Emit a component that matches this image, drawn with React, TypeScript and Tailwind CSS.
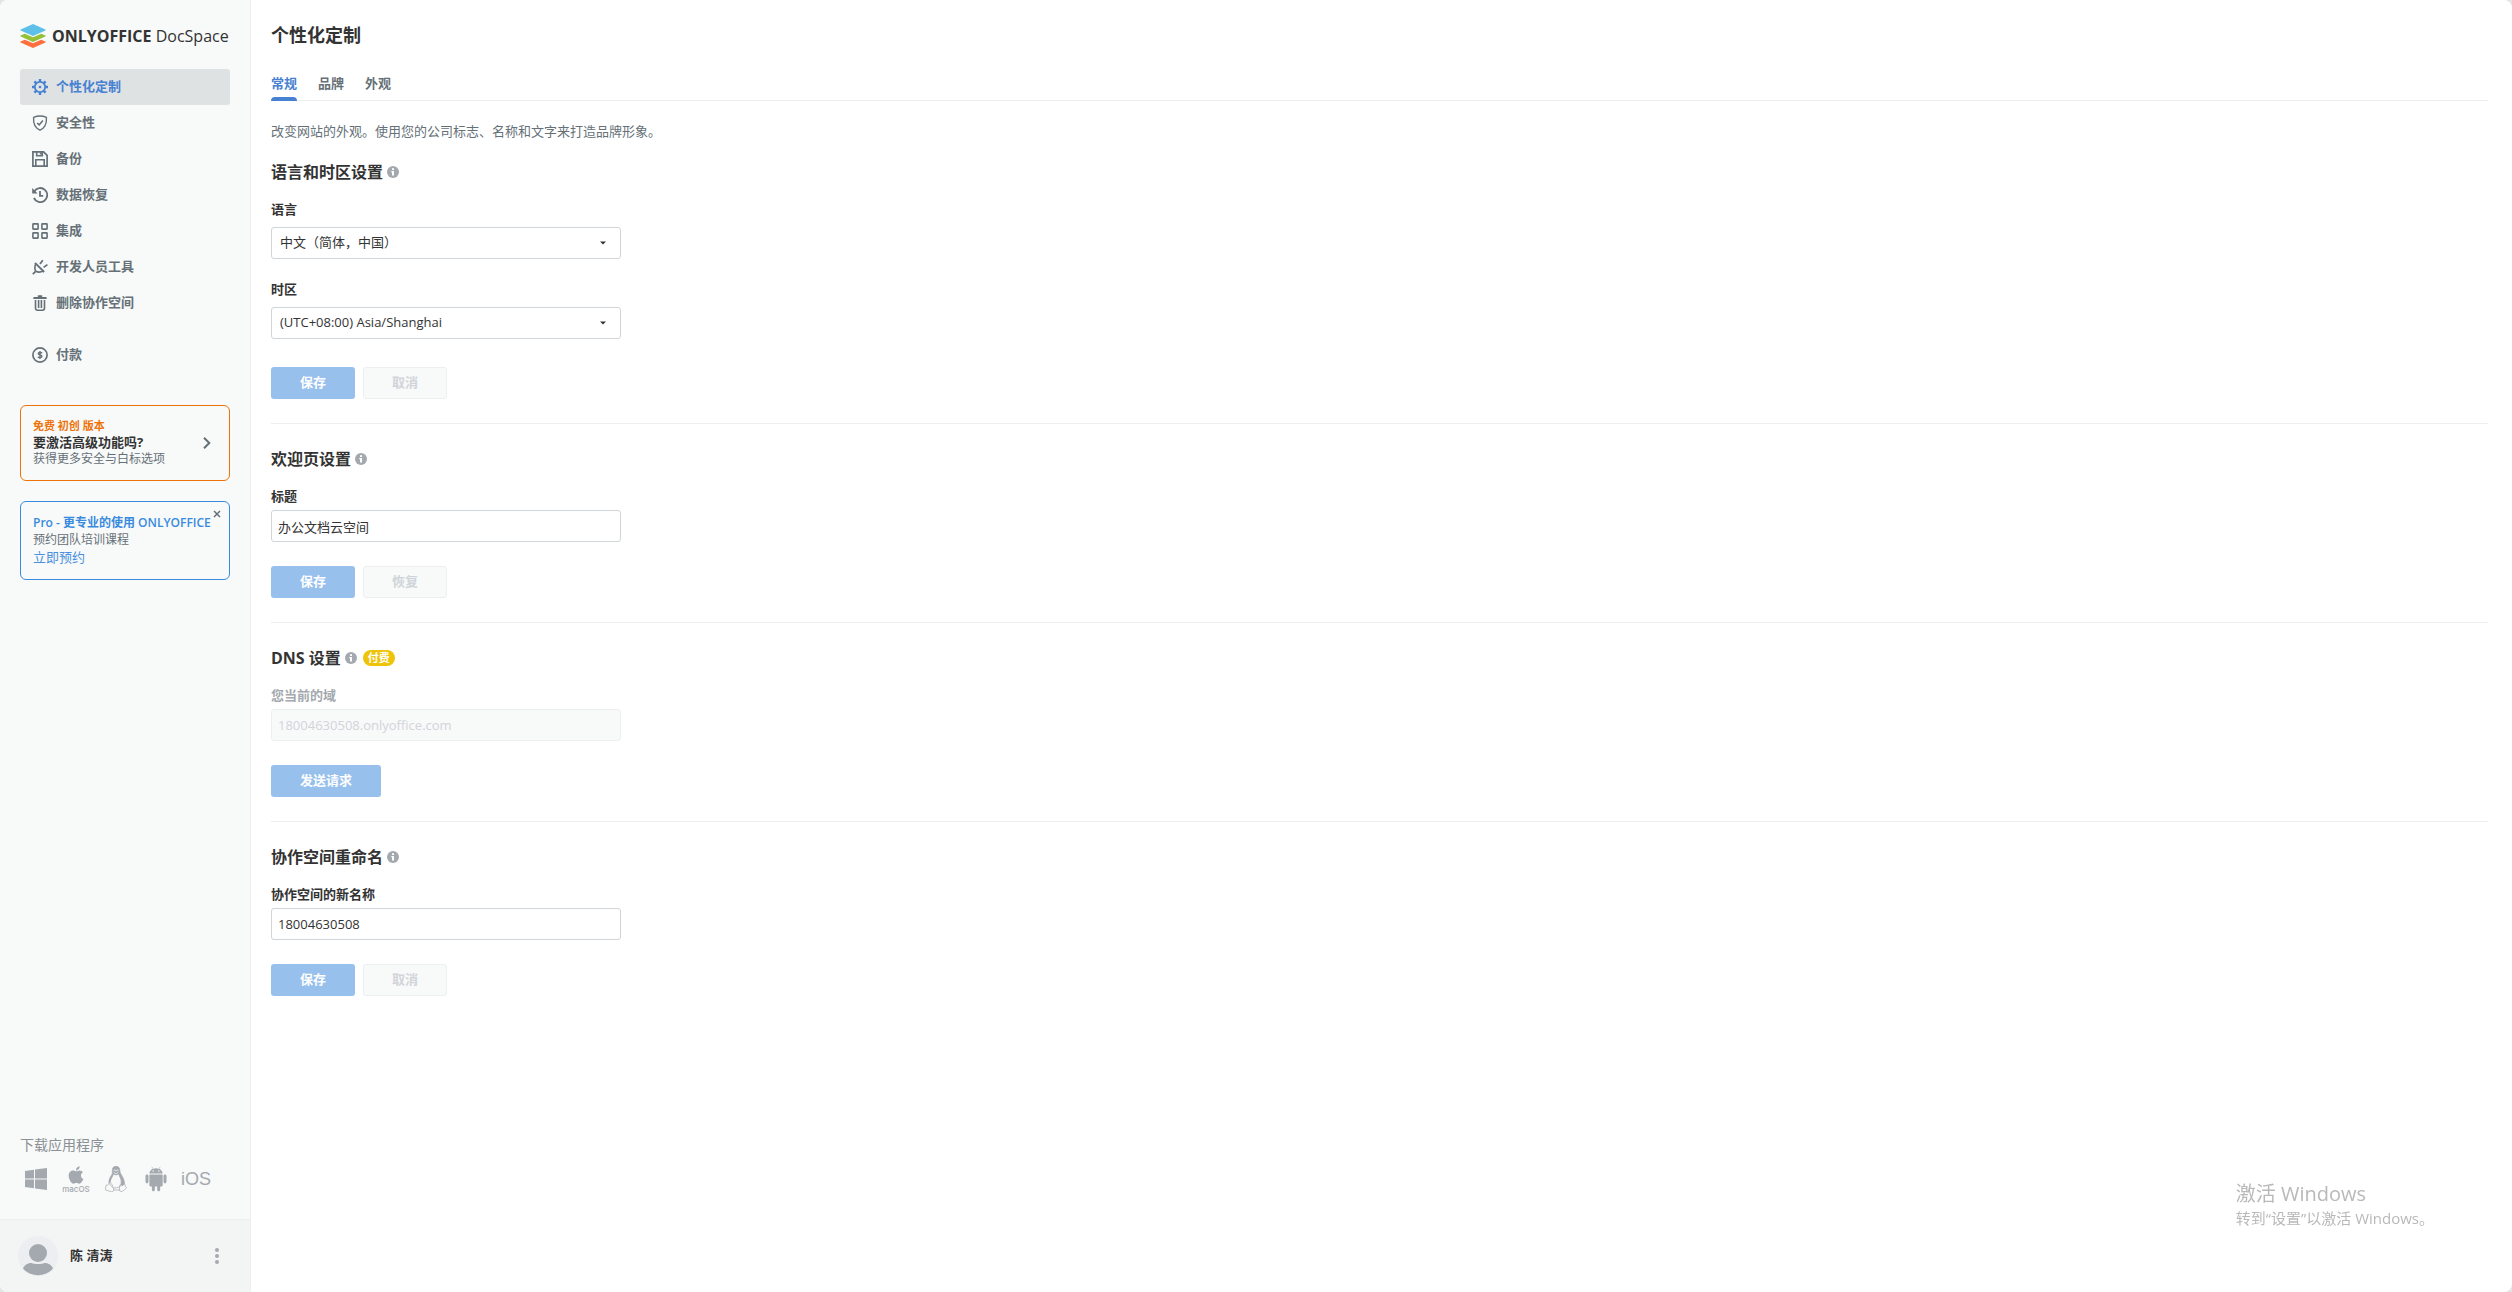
import type { FC, ReactNode } from 'react';
import { FaApple } from 'react-icons/fa';
import { AiFillAndroid } from 'react-icons/ai';

const Icon: FC<{ children: ReactNode }> = ({ children }) => (
  <svg viewBox="0 0 16 16" className="w-4 h-4 shrink-0" fill="none" stroke="currentColor" strokeWidth="1.6" aria-hidden="true">
    {children}
  </svg>
);

const GearIcon = () => (
  <Icon>
    <circle cx="8" cy="8" r="5.2" strokeWidth="1.8" />
    <path
      strokeWidth="2.4"
      d="M8 0v3M8 13v3M0 8h3M13 8h3M2.4 2.4l2 2M11.6 11.6l2 2M2.4 13.6l2-2M11.6 4.4l2-2"
    />
    <circle cx="8" cy="8" r="1.3" fill="currentColor" stroke="none" />
  </Icon>
);

const ShieldIcon = () => (
  <Icon>
    <path strokeWidth="1.4" d="M8 1C5.8 1 3.6 1.5 1.6 2.4 1.2 7.5 2.2 12.6 8 15.2c5.8-2.6 6.8-7.7 6.4-12.8C12.4 1.5 10.2 1 8 1z" />
    <path d="M5.2 8l2 1.9 3.7-4.3" />
  </Icon>
);

const DiskIcon = () => (
  <Icon>
    <path strokeWidth="1.7" d="M0.9 0.9h10.7l3.5 3.5v10.7H0.9z" />
    <path d="M4.7 1v3.7h5.6V1M8.6 1.5v2M3.8 15V8.8h8.4V15" />
  </Icon>
);

const HistoryIcon = () => (
  <Icon>
    <path strokeWidth="1.8" d="M2.2 4.5A7 7 0 1 1 1.9 11" />
    <path d="M0.2 1v5.4h5.4z" fill="currentColor" stroke="none" />
    <path strokeWidth="1.8" d="M8 4v4.8h3.2" />
  </Icon>
);

const GridIcon = () => (
  <Icon>
    <rect x="0.9" y="0.9" width="5.2" height="5.2" rx="0.5" />
    <rect x="9.9" y="0.9" width="5.2" height="5.2" rx="0.5" />
    <rect x="0.9" y="9.9" width="5.2" height="5.2" rx="0.5" />
    <rect x="9.9" y="9.9" width="5.2" height="5.2" rx="0.5" />
  </Icon>
);

const PlugIcon = () => (
  <Icon>
    <path d="M0.8 15.2l2.6-2.6M3 3.8l9.2 9.2" strokeWidth="1.8" />
    <path d="M3.8 4.5C2.6 7.6 2.6 10.4 3.8 12.2c2 1.2 4.8 1.2 7.7-0.1" />
    <path d="M8 5l2.8-3.8M11.6 8.4l3.8-2.8" strokeWidth="1.8" />
  </Icon>
);

const TrashIcon = () => (
  <Icon>
    <path d="M5.8 1.2h4.4M1.4 3.1h13.2" strokeWidth="2" />
    <path d="M3.5 5v8.3a1.9 1.9 0 0 0 1.9 1.9h5.2a1.9 1.9 0 0 0 1.9-1.9V5M6.6 5v8M9.4 5v8" />
  </Icon>
);

const CoinIcon = () => (
  <Icon>
    <circle cx="8" cy="8" r="7.1" strokeWidth="1.7" />
    <path d="M10 6.2C9.6 5.3 6.2 5 6.2 6.7c0 1.5 3.7 0.9 3.7 2.6C9.9 11 6.4 10.8 6 9.7M8 3.9v8.2" strokeWidth="1.4" />
  </Icon>
);

const nav = [
  { label: '个性化定制', icon: <GearIcon />, active: true },
  { label: '安全性', icon: <ShieldIcon /> },
  { label: '备份', icon: <DiskIcon /> },
  { label: '数据恢复', icon: <HistoryIcon /> },
  { label: '集成', icon: <GridIcon /> },
  { label: '开发人员工具', icon: <PlugIcon /> },
  { label: '删除协作空间', icon: <TrashIcon /> },
];

const NavItem: FC<{ label: string; icon: ReactNode; active?: boolean }> = ({ label, icon, active }) => (
  <a
    href="#"
    aria-current={active ? 'page' : undefined}
    className={`flex items-center gap-2 h-9 px-3 rounded-[3px] text-[13px] font-semibold ${
      active ? 'bg-[#dfe2e3] text-[#4781d1]' : 'text-[#657077]'
    }`}
  >
    {icon}
    {label}
  </a>
);

const Logo = () => (
  <a href="#" className="flex items-center gap-1.5 h-6 text-[#333] text-base">
    <svg viewBox="0 0 26 24" className="w-[26px] h-6 shrink-0" aria-hidden="true">
      <path d="M13 24L0.6 18.5c-0.5-0.3-0.5-0.7 0-1L4.8 15.7 13 19.3l8.2-3.6 4.2 1.8c0.5 0.3 0.5 0.7 0 1z" fill="#ff6f3d" />
      <path d="M13 18L0.6 12.5c-0.5-0.3-0.5-0.7 0-1L4.8 9.7 13 13.3l8.2-3.6 4.2 1.8c0.5 0.3 0.5 0.7 0 1z" fill="#95c038" />
      <path d="M13 12L0.6 6.5c-0.5-0.3-0.5-0.7 0-1L13 0l12.4 5.5c0.5 0.3 0.5 0.7 0 1z" fill="#5dc0e8" />
    </svg>
    <span className="whitespace-nowrap">
      <b className="font-bold">ONLYOFFICE</b> DocSpace
    </span>
  </a>
);

const Tux = () => (
  <svg viewBox="0 0 22 26" className="w-[22px] h-[26px]" fill="none" stroke="currentColor" strokeWidth="0.7" aria-hidden="true">
    <path d="M7.4 6C7 2 8.4 0.3 11 0.3S15 2 15 5.6c0.2 3 4.6 6 4.4 12.4l-2.6 2-0.6-5c-0.3-3-2-5-2.6-7L11 9 8.6 8C8 10 6.2 12 5.4 15L4 17.5c-0.6-3 1.4-7 2.6-8.4C7.3 8.2 7.5 7.2 7.4 6z" fill="currentColor" />
    <path d="M8.8 5.2a1 1.3 0 0 1 2 0M11.3 5.2a1 1.3 0 0 1 2 0M8.8 6.6l2.2 1 2.3-1" stroke="#f8f9f9" />
    <path d="M5.4 15c-0.6 2 2.6 4 2.4 5.5C7.6 22 10 22.6 14.4 21c1-3 2.4-4 1.8-6" />
    <path d="M4 17.5c-0.6 1.2-1.4 1.8-3 1.8-0.5 1.5 0 3-0.5 4.7 1.5 0.8 4 0.9 6 1.7 2 0.2 2.9-1.7 1.9-3.5z" />
    <path d="M16.4 18.2c-2 1.4-2.2 4-1.6 6.8 1.6 1.4 3.4 0 6.8-3.2-1.6-1.2-1.2-2.6-2.2-4-1.2 1.4-2 1.4-3 0.4z" />
    <path d="M8 24h7" />
  </svg>
);

const Sidebar = () => (
  <aside className="flex flex-col w-[251px] shrink-0 bg-[#f8f9f9] border-r border-[#eceef1]">
    <div className="px-5 pt-6">
      <Logo />
      <nav className="mt-[21px]">
        {nav.map((item) => (
          <NavItem key={item.label} {...item} />
        ))}
        <div className="mt-4">
          <NavItem label="付款" icon={<CoinIcon />} />
        </div>
      </nav>

      <button type="button" className="mt-8 flex items-center justify-between w-full h-[76px] pl-3 pr-[18px] rounded-md border border-[#ed7309] text-left">
        <span className="block">
          <span className="block text-[11px] leading-4 font-bold text-[#ed7309]">免费 初创 版本</span>
          <span className="block text-[13px] leading-4 font-bold text-[#333]">要激活高级功能吗?</span>
          <span className="block text-xs leading-[18px] text-[#657077]">获得更多安全与白标选项</span>
        </span>
        <svg viewBox="0 0 8 12" className="w-2 h-3" fill="none" stroke="#657077" strokeWidth="2" aria-hidden="true">
          <path d="M1 0.8L6.3 6 1 11.2" />
        </svg>
      </button>

      <div className="relative mt-5 h-[79px] px-3 pt-3 rounded-md border border-[#388bde]">
        <p className="text-xs leading-[18px] font-semibold text-[#388bde] whitespace-nowrap">Pro - 更专业的使用 ONLYOFFICE</p>
        <p className="text-xs leading-4 text-[#657077]">预约团队培训课程</p>
        <a href="#" className="block text-[13px] leading-[18px] text-[#4a90de]">立即预约</a>
        <button type="button" aria-label="关闭" className="absolute top-2 right-2 w-2 h-2">
          <svg viewBox="0 0 8 8" className="w-2 h-2" fill="none" stroke="#657077" strokeWidth="1.5">
            <path d="M1 1l6 6M7 1L1 7" />
          </svg>
        </button>
      </div>
    </div>

    <div className="mt-auto px-5 pb-6 text-[#a3a9ae]">
      <p className="text-sm leading-5 text-[#8a9094]">下载应用程序</p>
      <div className="mt-2 flex items-center h-8 gap-2">
        <a href="#" aria-label="Windows" className="flex w-8 justify-center">
          <svg viewBox="0 0 22 22" className="w-[22px] h-[22px]" fill="currentColor" aria-hidden="true">
            <path d="M0 3l9-1.2v8.7H0zM10 1.6L22 0v10.5H10zM0 11.5h9v8.7L0 19zM10 11.5h12V22l-12-1.6z" />
          </svg>
        </a>
        <a href="#" className="flex flex-col w-8 items-center text-[8px] leading-[8px] font-medium font-['Inter',sans-serif]">
          <FaApple size={20} />
          macOS
        </a>
        <a href="#" aria-label="Linux" className="flex w-8 justify-center">
          <Tux />
        </a>
        <a href="#" aria-label="Android" className="flex w-8 justify-center">
          <AiFillAndroid size={28} />
        </a>
        <a href="#" className="flex w-8 justify-center text-lg leading-6 font-medium font-['Liberation_Sans',sans-serif]">iOS</a>
      </div>
    </div>

    <div className="flex items-center h-[73px] pl-[18px] pr-7 bg-[#f3f4f4] border-t border-[#eceef1]">
      <svg viewBox="0 0 40 40" className="w-10 h-10 mr-3" aria-hidden="true">
        <circle cx="20" cy="20" r="20" fill="#eceef1" />
        <circle cx="20" cy="17" r="9" fill="#a3a9ae" />
        <path d="M5 32.5c1.8-4 5-5.5 8.5-5.5 2.5 1.4 10.5 1.4 13 0 3.5 0 6.7 1.5 8.5 5.5A20 20 0 0 1 5 32.5z" fill="#a3a9ae" />
      </svg>
      <span className="text-[13px] font-semibold text-[#333]">陈 清涛</span>
      <button type="button" aria-label="更多" className="ml-auto py-1">
        <svg viewBox="0 0 10 16" className="w-2.5 h-4" fill="#a3a9ae">
          <circle cx="5" cy="2" r="2" />
          <circle cx="5" cy="8" r="2" />
          <circle cx="5" cy="14" r="2" />
        </svg>
      </button>
    </div>
  </aside>
);

const SectionTitle: FC<{ children: ReactNode; badge?: string }> = ({ children, badge }) => (
  <div className="flex items-center h-6">
    <h2 className="text-base leading-6 font-bold text-[#333]">{children}</h2>
    <button type="button" aria-label="说明" className="ml-1">
      <svg viewBox="0 0 12 12" className="w-3 h-3">
        <circle cx="6" cy="6" r="6" fill="#a3a9ae" />
        <path d="M5 2.3h2v1.7H5zM4.3 5H7v4.5H5V6.2h-0.7z" fill="#fff" />
      </svg>
    </button>
    {badge && (
      <span className="ml-1.5 flex items-center justify-center w-8 h-4 rounded-full bg-[#edc409] text-[11px] font-bold text-white">
        {badge}
      </span>
    )}
  </div>
);

const SelectField: FC<{ id: string; label: string; value: string }> = ({ id, label, value }) => (
  <div>
    <label htmlFor={id} className="block text-[13px] leading-5 font-semibold text-[#333]">
      {label}
    </label>
    <div className="relative mt-2 max-w-[350px]">
      <select id={id} className="block appearance-none w-full h-8 px-2 rounded-[3px] border border-[#d0d5da] bg-white text-[13px] text-[#333]">
        <option>{value}</option>
      </select>
      <svg viewBox="0 0 6 4" className="absolute right-[15px] top-3.5 w-1.5 h-1 pointer-events-none" fill="#333" aria-hidden="true">
        <path d="M0 0.5h6L3 3.5z" />
      </svg>
    </div>
  </div>
);

const TextField: FC<{ id: string; label: string; value: string; disabled?: boolean }> = ({ id, label, value, disabled }) => (
  <div>
    <label htmlFor={id} className={`block text-[13px] leading-5 font-semibold ${disabled ? 'text-[#a3a9ae]' : 'text-[#333]'}`}>
      {label}
    </label>
    <input
      id={id}
      type="text"
      defaultValue={value}
      disabled={disabled}
      className={`block mt-1 w-full max-w-[350px] h-8 px-1.5 rounded-[3px] border text-[13px] ${
        disabled ? 'border-[#eceef1] bg-[#f8f9f9] text-[#d0d5da]' : 'border-[#d0d5da] bg-white text-[#333]'
      }`}
    />
  </div>
);

const Actions: FC<{ primary: string; secondary?: string }> = ({ primary, secondary }) => (
  <div className="flex gap-2">
    <button type="button" className="h-8 px-[29px] rounded-[3px] bg-[#97c0ec] text-[13px] font-bold text-white">
      {primary}
    </button>
    {secondary && (
      <button type="button" disabled className="h-8 px-7 rounded-[3px] border border-[#eceef1] bg-[#f8f9f9] text-[13px] font-semibold text-[#d0d5da]">
        {secondary}
      </button>
    )}
  </div>
);

const tabs = ['常规', '品牌', '外观'];

export default function App() {
  return (
    <div className="min-h-screen flex bg-[#e4e4e4] font-['Open_Sans','Noto_Sans_CJK_SC',sans-serif]">
      <div className="flex flex-1 min-w-0 rounded-lg overflow-hidden bg-white">
        <Sidebar />

        <main className="flex-1 min-w-0 pl-5 pr-6 pt-[23px] pb-10">
          <h1 className="text-lg leading-6 font-bold text-[#333]">个性化定制</h1>

          <nav className="mt-[26px] flex gap-[21px] border-b border-[#eceef1] text-[13px] leading-5 font-semibold">
            {tabs.map((tab, i) => (
              <a key={tab} href="#" className={`flex flex-col justify-between h-7 -mb-px ${i === 0 ? 'text-[#4781d1]' : 'text-[#657077]'}`}>
                {tab}
                {i === 0 && <span className="h-1 rounded-t-sm bg-[#4781d1]" />}
              </a>
            ))}
          </nav>

          <p className="mt-5 text-[13px] leading-5 text-[#657077]">
            改变网站的外观。使用您的公司标志、名称和文字来打造品牌形象。
          </p>

          <section className="mt-[19px] pb-6 border-b border-[#eceef1]">
            <SectionTitle>语言和时区设置</SectionTitle>
            <div className="mt-[15px] mb-7 space-y-5">
              <SelectField id="language" label="语言" value="中文（简体，中国）" />
              <SelectField id="timezone" label="时区" value="(UTC+08:00) Asia/Shanghai" />
            </div>
            <Actions primary="保存" secondary="取消" />
          </section>

          <section className="pt-[23px] pb-6 border-b border-[#eceef1]">
            <SectionTitle>欢迎页设置</SectionTitle>
            <div className="mt-[15px] mb-6">
              <TextField id="greeting" label="标题" value="办公文档云空间" />
            </div>
            <Actions primary="保存" secondary="恢复" />
          </section>

          <section className="pt-[23px] pb-6 border-b border-[#eceef1]">
            <SectionTitle badge="付费">DNS 设置</SectionTitle>
            <div className="mt-[15px] mb-6">
              <TextField id="domain" label="您当前的域" value="18004630508.onlyoffice.com" disabled />
            </div>
            <Actions primary="发送请求" />
          </section>

          <section className="pt-[23px]">
            <SectionTitle>协作空间重命名</SectionTitle>
            <div className="mt-[15px] mb-6">
              <TextField id="rename" label="协作空间的新名称" value="18004630508" />
            </div>
            <Actions primary="保存" secondary="取消" />
          </section>
        </main>
      </div>

      <div className="fixed right-[78px] bottom-16 text-[#b9b9b9] pointer-events-none">
        <p className="text-xl leading-7">激活 Windows</p>
        <p className="text-[15px] leading-5">转到“设置”以激活 Windows。</p>
      </div>
    </div>
  );
}
